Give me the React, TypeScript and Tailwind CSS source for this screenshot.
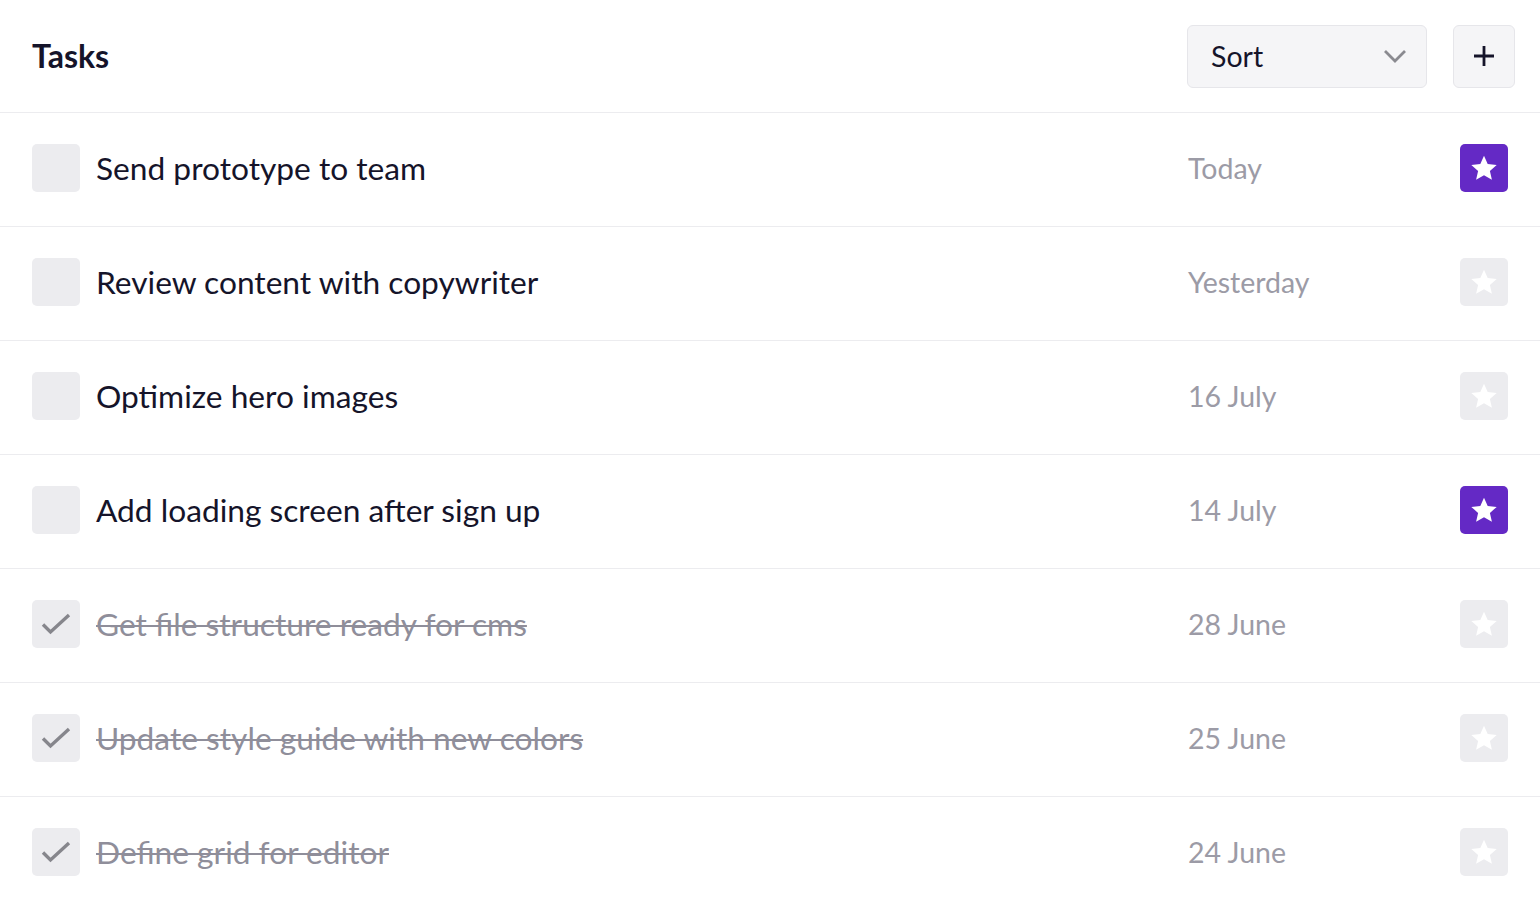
type Task = { title: string; date: string; starred: boolean; done: boolean }

const tasks: Task[] = [
  { title: 'Send prototype to team', date: 'Today', starred: true, done: false },
  { title: 'Review content with copywriter', date: 'Yesterday', starred: false, done: false },
  { title: 'Optimize hero images', date: '16 July', starred: false, done: false },
  { title: 'Add loading screen after sign up', date: '14 July', starred: true, done: false },
  { title: 'Get file structure ready for cms', date: '28 June', starred: false, done: true },
  { title: 'Update style guide with new colors', date: '25 June', starred: false, done: true },
  { title: 'Define grid for editor', date: '24 June', starred: false, done: true },
]

const Star = () => (
  <svg viewBox="0 0 24 24" className="h-[30px] w-[30px]" fill="white" aria-hidden="true">
    <path d="M12 2.2l2.95 6.6 7.2.7-5.43 4.8 1.6 7.1L12 17.7l-6.32 3.7 1.6-7.1L1.85 9.5l7.2-.7z" />
  </svg>
)

const CheckMark = () => (
  <svg viewBox="0 0 30 22" className="h-[22px] w-[30px]" fill="none" stroke="#86868c" strokeWidth={3.4} aria-hidden="true">
    <path d="M2 11.5l7.5 7.5L28 2" />
  </svg>
)

const TaskRow = ({ task }: { task: Task }) => (
  <div className="flex h-[114px] items-start border-b border-[#ececef] pl-8 pr-8 pt-[31px]">
    <div className="flex h-12 w-12 shrink-0 items-center justify-center rounded-[5px] bg-[#ececef]">
      {task.done && <CheckMark />}
    </div>
    <div
      className={`ml-4 flex h-12 flex-1 items-center pt-[2px] text-[31.7px] ${
        task.done ? 'text-[#8f8e9a] line-through decoration-2' : 'text-[#15142a]'
      }`}
    >
      {task.title}
    </div>
    <div className="flex h-12 w-[272px] items-center text-[28.5px] text-[#9c9ba6]">{task.date}</div>
    <div
      className={`flex h-12 w-12 items-center justify-center rounded-[5px] ${
        task.starred ? 'bg-[#6429c5]' : 'bg-[#ececef]'
      }`}
    >
      <Star />
    </div>
  </div>
)

export default function App() {
  return (
    <div className="min-h-screen bg-white font-['Lato',sans-serif]">
      <header className="flex h-[113px] items-center border-b border-[#ececef] pl-8 pr-[25px]">
        <h1 className="flex-1 text-[32px] font-bold text-[#15142a]">Tasks</h1>
        <button className="flex h-[63px] w-[240px] items-center justify-between rounded-[6px] border border-[#e6e6ea] bg-[#f5f5f7] pl-[23px] pr-[19px] text-[28.5px] text-[#15142a]">
          Sort
          <svg viewBox="0 0 24 14" className="h-[14px] w-[24px]" fill="none" stroke="#8a8a90" strokeWidth={2.8} aria-hidden="true">
            <path d="M2 2l10 10L22 2" />
          </svg>
        </button>
        <button className="ml-[26px] flex h-[63px] w-[62px] items-center justify-center rounded-[6px] border border-[#e6e6ea] bg-[#f5f5f7]">
          <svg viewBox="0 0 20 20" className="h-5 w-5" fill="none" stroke="#15142a" strokeWidth={2.8} aria-hidden="true">
            <path d="M10 0v20M0 10h20" />
          </svg>
        </button>
      </header>
      {tasks.map((t) => (
        <TaskRow key={t.title} task={t} />
      ))}
    </div>
  )
}
